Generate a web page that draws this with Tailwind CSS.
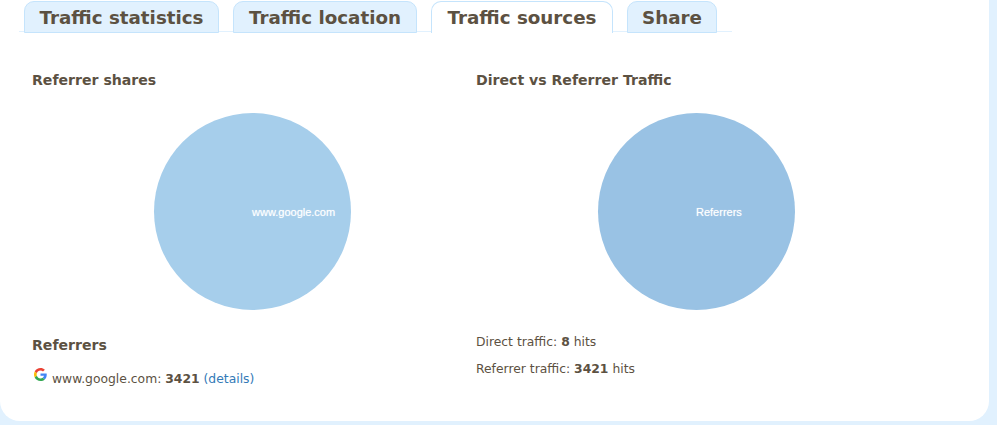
<!DOCTYPE html>
<html><head><meta charset="utf-8"><script src="https://cdn.jsdelivr.net/npm/@tailwindcss/browser@4"></script></head>
<body class="m-0 bg-[#e1f1fe] h-[425px] w-[997px] overflow-hidden font-['DejaVu_Sans',sans-serif] text-[#5c5142]">
<div class="w-[989px] h-[421px] bg-white rounded-br-[20px] rounded-bl-[20px] flex flex-col">
  <div class="mt-[1px] ml-[19px] w-[708px] flex pl-[5px] gap-[14px] border-b border-[#e1f1fe] box-content h-[30px]">
    <div class="w-[195px] h-[32px] shrink-0 pt-[2px] bg-[#e1f1fe] border border-[#c5e4fc] rounded-t-[10px] text-[18.3px] font-bold flex justify-center items-center">Traffic statistics</div>
    <div class="w-[184px] h-[32px] shrink-0 pt-[2px] bg-[#e1f1fe] border border-[#c5e4fc] rounded-t-[10px] text-[18.3px] font-bold flex justify-center items-center">Traffic location</div>
    <div class="w-[182px] h-[32px] shrink-0 pt-[1px] bg-white border border-b-0 border-[#c5e4fc] rounded-t-[10px] text-[18.3px] font-bold flex justify-center items-center">Traffic sources</div>
    <div class="w-[90px] h-[32px] shrink-0 pt-[2px] bg-[#e1f1fe] border border-[#c5e4fc] rounded-t-[10px] text-[18.3px] font-bold flex justify-center items-center">Share</div>
  </div>
  <div class="flex mt-[38px] pl-[32px]">
    <div class="w-[444px]">
      <h3 class="text-[14.1px] font-bold leading-[20px]">Referrer shares</h3>
      <div class="w-[440px] flex justify-center mt-[23px]">
        <div class="w-[197px] h-[197px] rounded-full bg-[#a6ceeb] relative">
          <span class="absolute left-[98.5px] top-[93px] text-[11px] leading-[13px] text-white font-['Liberation_Sans',sans-serif] [text-shadow:0_0_1px_rgba(255,255,255,0.6)]">www.google.com</span>
        </div>
      </div>
      <h3 class="text-[14.1px] font-bold leading-[20px] mt-[25px]">Referrers</h3>
      <div class="flex items-start mt-[16px] text-[12.35px] leading-[16px]">
        <svg class="w-[13px] h-[13px] mt-[-3px] ml-[1.5px] mr-[5.5px]" viewBox="0 0 48 48"><path fill="#EA4335" d="M24 9.5c3.5 0 6.7 1.2 9.2 3.6l6.9-6.9C35.9 2.4 30.5 0 24 0 14.6 0 6.5 5.400 2.600 13.200l8 6.200C12.400 13.700 17.700 9.500 24 9.500z"/><path fill="#4285F4" d="M46.980 24.550c0-1.570-.15-3.090-.38-4.550H24v9.020h12.940c-.58 2.960-2.260 5.480-4.780 7.180l7.730 6c4.510-4.180 7.090-10.360 7.090-17.650z"/><path fill="#FBBC05" d="M10.530 28.590c-.48-1.450-.76-2.990-.76-4.590s.27-3.140.76-4.590l-7.980-6.190C.92 16.460 0 20.120 0 24c0 3.880.92 7.540 2.560 10.780l7.970-6.190z"/><path fill="#34A853" d="M24 48c6.480 0 11.930-2.130 15.890-5.810l-7.730-6c-2.150 1.450-4.920 2.300-8.160 2.300-6.260 0-11.570-4.220-13.470-9.910l-7.980 6.190C6.510 42.620 14.620 48 24 48z"/></svg>
        <span>www.google.com: <b>3421</b> <span class="text-[#337ab7]">(details)</span></span>
      </div>
    </div>
    <div class="w-[440px]">
      <h3 class="text-[14.1px] font-bold leading-[20px]">Direct vs Referrer Traffic</h3>
      <div class="w-[440px] flex justify-center mt-[23px]">
        <div class="w-[197px] h-[197px] rounded-full bg-[#99c2e4] relative">
          <span class="absolute left-[98.5px] top-[93px] text-[11px] leading-[13px] text-white font-['Liberation_Sans',sans-serif] [text-shadow:0_0_1px_rgba(255,255,255,0.6)]">Referrers</span>
        </div>
      </div>
      <p class="text-[12.35px] leading-[16px] mt-[24px]">Direct traffic: <b>8</b> hits</p>
      <p class="text-[12.35px] leading-[16px] mt-[11px]">Referrer traffic: <b>3421</b> hits</p>
    </div>
  </div>
</div>
</body></html>
